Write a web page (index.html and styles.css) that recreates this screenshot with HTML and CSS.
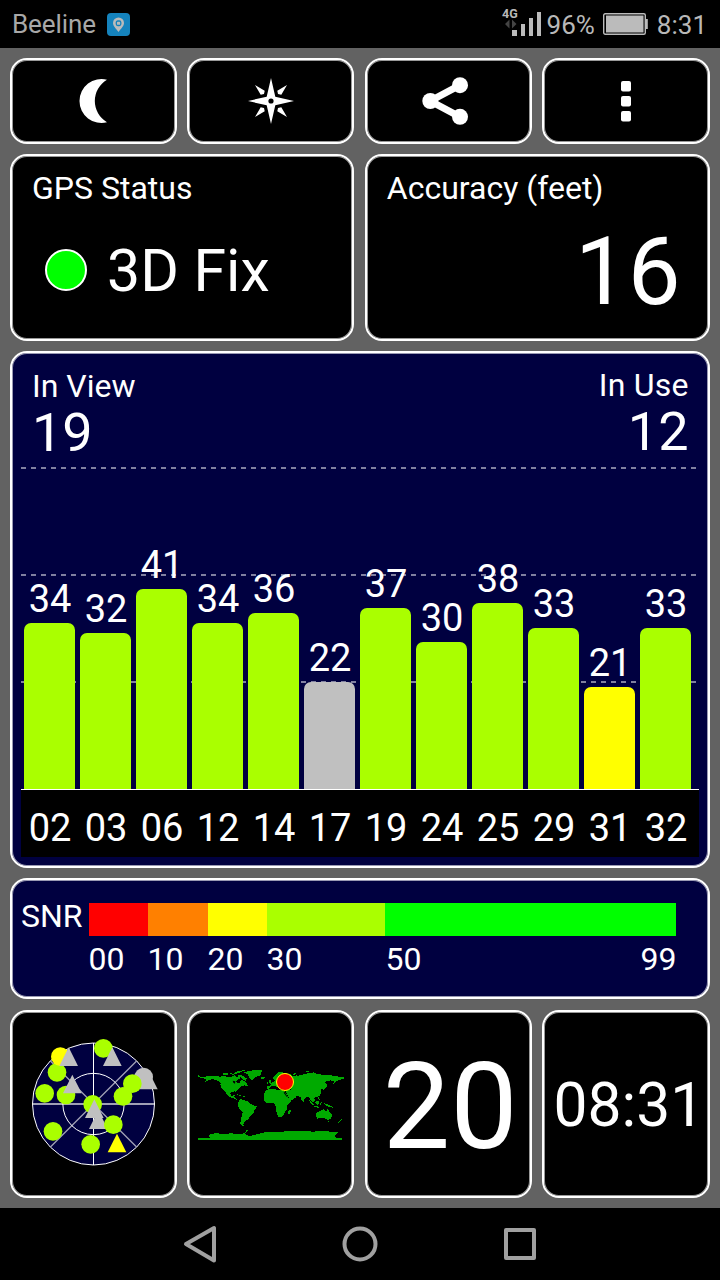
FILE: index.html
```html
<!DOCTYPE html>
<html lang="en">
<head>
    <meta charset="UTF-8">
    <meta name="viewport" content="width=device-width, initial-scale=1.0">
    <title>GPS Test</title>
    <link rel="stylesheet" href="styles.css">
</head>
<body>
    <header class="status-bar">
        <span class="carrier">Beeline</span>
        <svg class="app-icon" width="23" height="23" viewBox="0 0 23 23">
            <rect width="23" height="23" rx="4" fill="#1583bd"/>
            <path d="M11.500 19C9 15.500 6 13 6 10a5.500 5.500 0 0 1 11 0c0 3-3 5.500-5.500 9z" fill="#bbb"/>
            <rect x="9.300" y="8" width="4.500" height="4.500" rx="1.500" fill="none" stroke="#1583bd" stroke-width="1.300"/>
        </svg>
        <svg class="signal" width="42" height="48" viewBox="0 0 42 48">
            <text x="1" y="17.500" class="network">4G</text>
            <path d="M4 24l4.500-4.500v9zM15.500 24l-4.500-4.500v9z" fill="#444"/>
            <path d="M11 30h5v6h-5zM20 24h4v12h-4zM28 18h4v18h-4zM36 12h4v24h-4z" fill="#bbb"/>
        </svg>
        <span class="percent">96%</span>
        <svg class="battery" width="45" height="22" viewBox="0 0 45 22">
            <rect x="0.700" y="0.700" width="41.600" height="20.600" rx="1.500" fill="none" stroke="#bbb" stroke-width="1.400"/>
            <rect x="3" y="2.500" width="37.500" height="17" fill="#bbb"/>
            <path d="M42 6h2.800v10H42z" fill="#bbb"/>
        </svg>
        <span class="time">8:31</span>
    </header>

    <main class="dashboard">
        <button class="card btn">
            <svg width="60" height="60" viewBox="0 0 60 60">
                <path d="M43 8.700A22 22 0 1 0 43 51.300A24.700 24.700 0 0 1 43 8.700z" fill="#fff"/>
            </svg>
        </button>
        <button class="card btn">
            <svg width="60" height="60" viewBox="-30 -30 60 60">
                <path d="M0-23L4.300-4.300 23 0 4.300 4.300 0 23-4.300 4.300-23 0-4.300-4.300z" fill="#fff"/>
                <path d="M16-16L6.300-10.300 7-7 10.300-6.300zM16 16L6.300 10.300 7 7 10.300 6.300zM-16 16L-6.300 10.300-7 7-10.300 6.300zM-16-16L-6.300-10.300-7-7-10.300-6.300z" fill="#fff"/>
                <circle r="2.600"/>
            </svg>
        </button>
        <button class="card btn">
            <svg width="60" height="60" viewBox="0 0 60 60">
                <path d="M42 14.200L12.300 30 42 45.800" fill="none" stroke="#fff" stroke-width="7"/>
                <g fill="#fff">
                    <circle cx="12.300" cy="30" r="8"/>
                    <circle cx="42" cy="14.200" r="8"/>
                    <circle cx="42" cy="45.800" r="8"/>
                </g>
            </svg>
        </button>
        <button class="card btn">
            <svg width="60" height="60" viewBox="0 0 60 60" fill="#fff">
                <rect x="25" y="10" width="10" height="10.500" rx="2"/>
                <rect x="25" y="25" width="10" height="10.500" rx="2"/>
                <rect x="25" y="40" width="10" height="10.500" rx="2"/>
            </svg>
        </button>

        <section class="card half">
            <h2 class="label">GPS Status</h2>
            <div class="fix">
                <span class="fix-light"></span>
                <span>3D Fix</span>
            </div>
        </section>
        <section class="card half">
            <h2 class="label">Accuracy (feet)</h2>
            <div class="accuracy">16</div>
        </section>

        <section class="card full chart">
            <div class="counts">
                <div>
                    <h2 class="label">In View</h2>
                    <div class="count">19</div>
                </div>
                <div class="in-use">
                    <h2 class="label">In Use</h2>
                    <div class="count">12</div>
                </div>
            </div>
            <div class="plot">
                <div class="sat"><span>34</span><div class="bar" style="height:166px"></div></div>
                <div class="sat"><span>32</span><div class="bar" style="height:156px"></div></div>
                <div class="sat"><span>41</span><div class="bar" style="height:200px"></div></div>
                <div class="sat"><span>34</span><div class="bar" style="height:166px"></div></div>
                <div class="sat"><span>36</span><div class="bar" style="height:176px"></div></div>
                <div class="sat"><span>22</span><div class="bar unused" style="height:107px"></div></div>
                <div class="sat"><span>37</span><div class="bar" style="height:181px"></div></div>
                <div class="sat"><span>30</span><div class="bar" style="height:147px"></div></div>
                <div class="sat"><span>38</span><div class="bar" style="height:186px"></div></div>
                <div class="sat"><span>33</span><div class="bar" style="height:161px"></div></div>
                <div class="sat"><span>21</span><div class="bar weak" style="height:102px"></div></div>
                <div class="sat"><span>33</span><div class="bar" style="height:161px"></div></div>
            </div>
            <div class="axis">
                <span>02</span><span>03</span><span>06</span><span>12</span><span>14</span><span>17</span>
                <span>19</span><span>24</span><span>25</span><span>29</span><span>31</span><span>32</span>
            </div>
        </section>

        <section class="card full snr">
            <h2 class="label">SNR</h2>
            <div class="scale">
                <div class="red"></div>
                <div class="orange"></div>
                <div class="yellow"></div>
                <div class="lime"></div>
                <div class="green"></div>
                <span>00</span>
                <span>10</span>
                <span>20</span>
                <span>30</span>
                <span class="last"><span>50</span><span>99</span></span>
            </div>
        </section>

        <section class="card tile">
            <svg width="150" height="150" viewBox="-3 -3 450 450">
                <circle cx="220.500" cy="222" r="183" fill="#000040"/>
                <path d="M92 350L349 94M92 94L349 350" stroke="#9f9fb4" stroke-width="4"/>
                <path d="M38 222H403" stroke="#9f9fb4" stroke-width="6"/>
                <path d="M220.500 39V405" stroke="#fff" stroke-width="3"/>
                <g fill="none" stroke="#fff" stroke-width="3">
                    <circle cx="220.500" cy="222" r="183"/>
                    <circle cx="220.500" cy="222" r="92"/>
                </g>
                <g fill="#af0">
                    <circle cx="111" cy="127" r="28"/>
                    <circle cx="74" cy="190" r="28"/>
                    <circle cx="138" cy="195" r="28"/>
                    <circle cx="250" cy="55" r="28"/>
                    <circle cx="99" cy="304" r="28"/>
                    <circle cx="212" cy="343" r="28"/>
                    <circle cx="218" cy="223" r="28"/>
                </g>
                <circle cx="121" cy="80" r="28" fill="#ff0"/>
                <g fill="#c0c0c0">
                    <path d="M146 52l28 56h-56zM277 52l28 56h-56zM157 134l28 56h-56zM223 208l28 56h-56zM235 241l28 56h-56z"/>
                    <circle cx="371" cy="141" r="28"/>
                    <path d="M385 122l28 56h-56z"/>
                </g>
                <g fill="#af0">
                    <circle cx="309" cy="199" r="28"/>
                    <circle cx="337" cy="161" r="28"/>
                    <circle cx="280" cy="284" r="28"/>
                </g>
                <path d="M291 311l28 56h-56z" fill="#ff0"/>
            </svg>
        </section>
        <section class="card tile">
            <svg width="160" height="100" viewBox="3 12 480 300">
                <g class="land">
                    <!-- Americas -->
                    <path d="M24 75l10 6h10l10-4 16 0 10 2 12 1 8-2 10 2h15l8-4 7 6 8-2 2 6-8 4-4 6 6 5 6-3 2-6 6-2 5 3 5 4 4 6-6 3-8 1-6 3-4 4-5 4-3 4-2 4-5-2-7 2-5 4 1 6 4 2 5-3 3 1-2 5 5 2 3 5 6 2-8-1-10-5-10-4-6-6-5-7-7-6-6-8-3-8 1-7-6-5-10-4-10-1-10 3-10 4 4-5-6-4-8-2-12-3z"/>
                    <path d="M93 72l15-4 9 5-12 3zM120 69l10 3 8-6 12-4 15-1-11 5-10 4-12 4-10-1zM145 74l10 2 8 5 8 4-4 7-7-2-5-7-10-3zM164 66l16-4 20-2 16 1-2 7-2 8-12 4-8 4-6 6-6-4-4-8-4-7-10-1zM141 133l10 2 5 3-7-1zM157 138l9 1-5 3zM164 106l10-1 2 4-8 0zM213 82h12l-3 5-8-1z"/>
                    <path d="M146 151l6-4 10 3 10 4 6 6 10 5 12 4-2 7-5 6-3 8-6 6-6 6-4 6-6 3-4 5-4 6 2 6-7-1-4-7 2-12 3-12 2-10-8-8-6-10 1-8z"/>
                    <!-- Africa and Madagascar -->
                    <path d="M221 138l2-8 5-8 8-5 12-1h8l6 5 8-1 12 2 6 8 5 10 6 7h7l-4 8-8 8-4 7 1 8-6 8-4 8-6 7-9 1-5-10-3-10 1-10-4-8-5-6h-10l-12 1-7-7zM299 180l4-2-1 8-4 8-4-2 1-7z"/>
                    <!-- Europe and Asia -->
                    <path d="M232 118v-9l8-1 3-5-3-3 9-3 7-7-6-2-2-6 9-8 9-6 8-2 12 4 16 2 6 8 10-4 8 1 16-4 12-3 18-3 8 5 18 2 24 2 20 3 19 3v5l-11 2-8 3-8 6-4 4 2-8-10-3-12 3-4 4 6 6-4 10-8 6-4-4-4 6 2 8-6 8-10 4-6 2 4 8-6 6-6-6-4-4-3-6-7-2-6 6-4 10-6-6-2-8-8-4-7-1 1 5-8 6-8 3-6-9-7-14-5-8-12-3-3-7-8 3-6-5-8-1-8 8zM236 92l6-2 2 8-8 2zM231 97h3v4h-3zM260 68l12-2v3zM306 72l14-3-6 6zM408 104l4 2-2 5-6 4 2-5zM346 64l10-1v4z"/>
                    <!-- Oceania -->
                    <path d="M358 151l7 6 7 8-4 1-7-7zM372 168l14 2 6 1-8 2-12-2zM376 156l8-5 4 3-3 10-8-1zM390 158l5-1-2 7-4 2zM384 142l3 1 3 9-4-2zM402 160l10 2 12 6 4 5-8-2-7-2-8-4zM380 188l8-4 6-4 6-2 4 4h6l2-6 6 8 7 8 1 8-6 8-8 2-8-5-10-1-12 2-4-8zM412 213h6l-3 5zM454 206l3 3-5 5-6 5-2-2 7-6z"/>
                    <!-- Antarctica -->
                    <path d="M24 270v-6h36l-6-6 9-7 20-1 20 2 20-2 20 2 20-2 5-6 3-6 2 4-8 8 4 4 8 5 20-5 21-6 19-2h30l30-3 40-1 30 3 30-2 25 2 22 1-4 6-7 6 6 6h17v6z"/>
                </g>
                <path d="M128 92l8 2-1 7-5-3zM268 112l8-3 8 2-2 4h-12zM299 108l5 3-1 9-3-1zM283 125l10 16-2 1-10-14z"/>
                <circle cx="285" cy="96" r="25.500" fill="#f00" stroke="#ff0" stroke-width="3"/>
            </svg>
        </section>
        <section class="card tile day">20</section>
        <section class="card tile clock">08:31</section>
    </main>

    <nav class="nav-bar">
        <svg width="36" height="40" viewBox="0 0 36 40"><path d="M32 4v32.500L4 20z"/></svg>
        <svg width="40" height="40" viewBox="0 0 40 40"><circle cx="20" cy="20" r="15.500"/></svg>
        <svg width="36" height="40" viewBox="0 0 36 40"><rect x="4" y="6" width="28" height="28"/></svg>
    </nav>
</body>
</html>
```

FILE: styles.css
```css
:root {
    --navy: #000040;
    --gray: #626262;
    --lime: #aaff00;
    --status-color: #b8b8b8;
    --dash: repeating-linear-gradient(90deg, #8080a0 0 5px, transparent 5px 10px);
}

* {
    margin: 0;
    padding: 0;
    box-sizing: border-box;
}

body {
    width: 720px;
    height: 1280px;
    display: flex;
    flex-direction: column;
    font-family: Roboto, sans-serif;
    color: white;
    background-color: black;
    overflow: hidden;
}

/* Status bar */
.status-bar {
    height: 48px;
    display: flex;
    align-items: center;
    padding: 0 13px 0 12px;
    font-size: 26px;
    color: var(--status-color);
}

.carrier {
    color: #a8a8a8;
    letter-spacing: -0.1px;
}

.app-icon {
    margin-left: 11px;
}

.signal {
    margin-left: auto;
    margin-right: 4px;
}

.network {
    font-size: 12.5px;
    font-weight: 700;
    fill: var(--status-color);
}

.percent,
.time {
    padding-top: 2px;
}

.battery {
    margin: 0 9px 0 8px;
}

/* Dashboard grid */
.dashboard {
    height: 1160px;
    display: grid;
    grid-template-columns: 167px 167px 167px 167.4px;
    grid-template-rows: 86px 187px 517px 121px 189px;
    gap: 10px 10.4px;
    padding: 10px;
    background-color: var(--gray);
}

.card {
    border: 2px solid white;
    border-radius: 17px;
    background-color: black;
    box-shadow: inset 0 0 0 1px rgba(255, 255, 255, 0.6);
    min-width: 0;
}

.btn {
    display: flex;
    justify-content: center;
    align-items: center;
}

.half {
    grid-column: span 2;
    padding: 16px 20px;
}

.full {
    grid-column: span 4;
    background-color: var(--navy);
}

.label {
    font-size: 32px;
    font-weight: 400;
    line-height: 32px;
}

/* Status and accuracy */
.fix {
    display: flex;
    align-items: center;
    gap: 20px;
    margin: 37px 0 0 13px;
    font-size: 59px;
    line-height: 60px;
}

.fix-light {
    width: 42px;
    height: 42px;
    border: 2px solid white;
    border-radius: 50%;
    background-color: #00ff00;
    margin-bottom: 2px;
}

.accuracy {
    font-size: 94px;
    line-height: 96px;
    margin-top: 20px;
    padding-right: 7px;
    text-align: right;
}

/* Satellite chart */
.chart {
    display: flex;
    flex-direction: column;
    padding: 17px 9px 0;
}

.counts {
    display: flex;
    justify-content: space-between;
    height: 96px;
    padding: 0 10px 0 11px;
}

.in-use {
    text-align: right;
}

.in-use .label {
    margin: -1px 0 1px;
    letter-spacing: 0.2px;
}

.count {
    font-size: 54px;
    line-height: 54px;
    margin-top: 4px;
}

.plot {
    height: 323px;
    display: flex;
    align-items: flex-end;
    gap: 5px;
    padding-left: 3px;
    background-image: var(--dash), var(--dash), var(--dash);
    background-size: 675px 2px;
    background-position: 0 1px, 0 108px, 0 215px;
    background-repeat: no-repeat;
}

.sat {
    width: 51px;
    font-size: 38px;
    line-height: 38px;
    text-align: center;
}

.sat span {
    display: block;
    margin: 0 -3px 5px -2px;
}

.bar {
    background-color: var(--lime);
    border-radius: 7px 7px 0 0;
}

.bar.unused {
    background-color: #c0c0c0;
}

.bar.weak {
    background-color: #ffff00;
}

.axis {
    display: flex;
    gap: 5px;
    height: 68px;
    width: 678px;
    padding: 19px 0 0 3px;
    border-top: 1px solid white;
    background-color: black;
    font-size: 38px;
    line-height: 38px;
}

.axis span {
    width: 51px;
    padding-left: 1px;
    text-align: center;
}

/* SNR legend */
.snr {
    display: flex;
    padding: 20px 9px 0;
}

.scale {
    display: grid;
    grid-template-columns: 59px 60px 59px 118px 291px;
    grid-template-rows: 33px 32px;
    row-gap: 7px;
    margin: 3px 0 0 auto;
    padding-right: 23px;
    font-size: 32px;
    line-height: 32px;
}

.red {
    background-color: #ff0000;
}

.orange {
    background-color: #ff8000;
}

.yellow {
    background-color: #ffff00;
}

.lime {
    background-color: var(--lime);
}

.green {
    background-color: #00ff00;
}

.last {
    display: flex;
    justify-content: space-between;
    padding-left: 1px;
    margin-right: -1px;
}

/* Bottom tiles */
.tile {
    display: flex;
    justify-content: center;
    align-items: center;
    margin-top: 1px;
}

.land {
    fill: #00aa00;
    shape-rendering: crispEdges;
}

.day {
    font-size: 120px;
    padding: 5px 0 0 4px;
}

.clock {
    font-size: 60.5px;
    padding: 2px 0 0 6px;
}

/* Navigation bar */
.nav-bar {
    height: 72px;
    display: flex;
    justify-content: space-between;
    align-items: center;
    padding: 0 182px;
}

.nav-bar svg {
    fill: none;
    stroke: #a0a0a0;
    stroke-width: 4;
    stroke-linejoin: round;
}
```
